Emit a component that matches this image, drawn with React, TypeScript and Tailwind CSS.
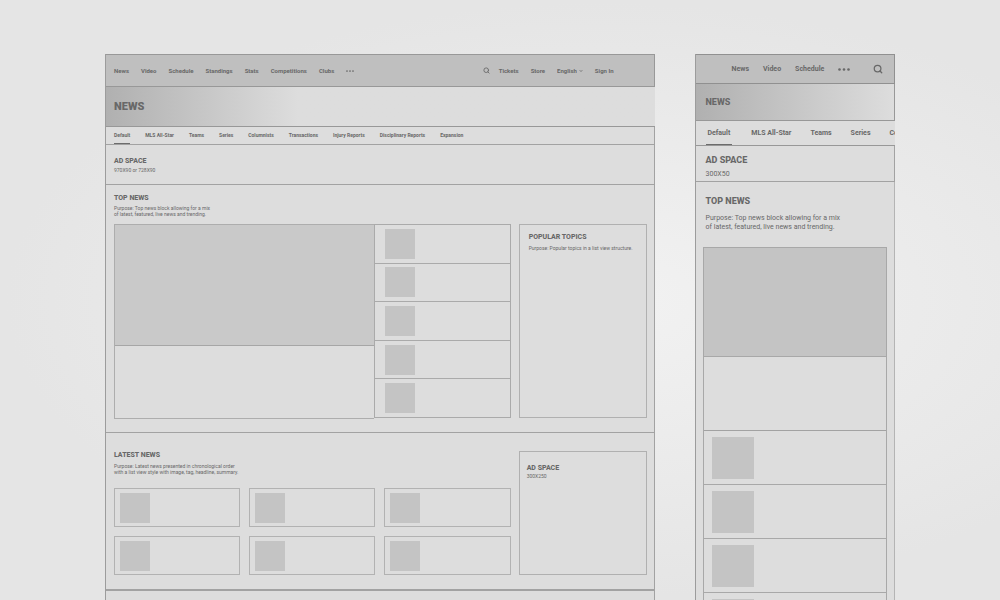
import { Search, ChevronDown } from 'lucide-react';

const desktopLinks = ['News', 'Video', 'Schedule', 'Standings', 'Stats', 'Competitions', 'Clubs'];
const mobileLinks = ['News', 'Video', 'Schedule'];

const desktopTabs = [
  'Default',
  'MLS All-Star',
  'Teams',
  'Series',
  'Columnists',
  'Transactions',
  'Injury Reports',
  'Disciplinary Reports',
  'Expansion'
];
const mobileTabs = ['Default', 'MLS All-Star', 'Teams', 'Series', 'Columnists'];

function DesktopFrame() {
  return (
    <div className="flex min-w-0 flex-[11_1_0%] flex-col border-l border-[#9c9c9c] bg-[#dddddd]">
      {/* Main navigation */}
      <header className="flex h-[33px] shrink-0 items-center justify-between border-y border-r border-[#989898] bg-[#bfbfbf] pr-10 pl-2 text-[6px] leading-[8px] font-bold">
        <nav className="flex items-center gap-3">
          {desktopLinks.map((link) => (
            <a key={link} href="#" className="whitespace-nowrap">
              {link}
            </a>
          ))}
          <MoreButton className="h-[2px] w-2" />
        </nav>
        <div className="flex items-center gap-3">
          <button type="button" aria-label="Search" className="-mr-[3px]">
            <Search className="size-[7px]" strokeWidth={3} />
          </button>
          <a href="#">Tickets</a>
          <a href="#">Store</a>
          <div className="flex items-center gap-[2px]">
            <select aria-label="Language" className="field-sizing-content appearance-none bg-transparent">
              <option>English</option>
            </select>
            <ChevronDown className="pointer-events-none size-1" strokeWidth={5} />
          </div>
          <a href="#">Sign In</a>
        </div>
      </header>

      <div className="flex h-10 shrink-0 items-center border-b border-[#989898] bg-linear-to-r from-[#b0b0b0] to-[#dddddd] to-35% pl-2">
        <h1 className="text-[11px] leading-[12px] font-black">NEWS</h1>
      </div>

      <nav className="flex h-[18px] shrink-0 gap-[15px] border-r border-b border-[#a2a2a2] pl-2 text-[5px] font-bold">
        {desktopTabs.map((tab, i) => (
          <a
            key={tab}
            href="#"
            className={
              i === 0
                ? 'flex items-center border-b border-[#6c6c6c] pt-px whitespace-nowrap'
                : 'flex items-center border-b border-transparent pt-px whitespace-nowrap'
            }
          >
            {tab}
          </a>
        ))}
      </nav>

      <section className="h-10 shrink-0 border-r border-b border-[#a2a2a2] pt-3 pl-2">
        <h2 className="text-[7px] leading-[8px] font-extrabold">AD SPACE</h2>
        <p className="mt-[2px] text-[5px] leading-[6px]">970X90 or 728X90</p>
      </section>

      {/* Top news */}
      <section className="shrink-0 border-r border-b border-[#a2a2a2] pt-[9px] pr-[7px] pb-[13px] pl-2">
        <h2 className="text-[7px] leading-[9px] font-extrabold">TOP NEWS</h2>
        <p className="mt-[2px] text-[5px] leading-[6px]">
          Purpose: Top news block allowing for a mix
          <br />
          of latest, featured, live news and trending.
        </p>
        <div className="mt-[7px] grid h-[195px] grid-cols-[397fr_128fr] gap-2">
          <div className="grid grid-cols-[260fr_136fr]">
            <article className="flex flex-col border border-r-0 border-[#adadad]">
              <div className="h-[121px] border-b border-[#a6a6a6] bg-[#c9c9c9]" />
            </article>
            <ul className="mb-px flex flex-col border border-[#aaaaaa]">
              {[1, 2, 3, 4, 5].map((n) => (
                <li key={n} className="flex flex-1 items-center border-b border-[#aaaaaa] pl-[10px] last:border-b-0">
                  <div className="size-[30px] bg-[#c4c4c4]" />
                </li>
              ))}
            </ul>
          </div>
          <aside className="mb-px border border-[#b0b0b0] pt-2 pl-[9px]">
            <h2 className="text-[7px] leading-[9px] font-extrabold">POPULAR TOPICS</h2>
            <p className="mt-[3px] text-[5px] leading-[6px] whitespace-nowrap">
              Purpose: Popular topics in a list view structure.
            </p>
          </aside>
        </div>
      </section>

      {/* Latest news */}
      <section className="grid shrink-0 grid-cols-[397fr_128fr] gap-2 border-r border-b-2 border-[#a2a2a2] pt-[18px] pr-[7px] pb-[14px] pl-2">
        <div>
          <h2 className="text-[7px] leading-[9px] font-extrabold">LATEST NEWS</h2>
          <p className="mt-[3px] text-[5px] leading-[6px]">
            Purpose: Latest news presented in chronological order
            <br />
            with a list view style with image, tag, headline, summary.
          </p>
          <div className="mt-[13px] grid grid-cols-3 gap-[9px]">
            {[1, 2, 3, 4, 5, 6].map((n) => (
              <article key={n} className="flex h-[39px] items-center border border-[#b2b2b2] pl-[5px]">
                <div className="size-[30px] bg-[#c4c4c4]" />
              </article>
            ))}
          </div>
        </div>
        <aside className="border border-[#b0b0b0] pt-3 pl-[7px]">
          <h2 className="text-[7px] leading-[8px] font-extrabold">AD SPACE</h2>
          <p className="mt-px text-[5px] leading-[6px]">300X250</p>
        </aside>
      </section>

      <section className="flex-1 border-r border-[#a2a2a2]" />
    </div>
  );
}

function MobileFrame() {
  return (
    <div className="flex min-w-0 flex-[4_1_0%] flex-col border-l border-[#9c9c9c] bg-[#dddddd]">
      <header className="flex h-[30px] shrink-0 items-center justify-between border-y border-r border-[#909090] bg-[#bfbfbf] pr-[11px] pl-9 text-[7px] leading-[9px] font-bold">
        <nav className="flex items-center gap-[14px]">
          {mobileLinks.map((link) => (
            <a key={link} href="#">
              {link}
            </a>
          ))}
          <MoreButton className="h-[3px] w-3" />
        </nav>
        <button type="button" aria-label="Search">
          <Search className="size-[10px]" strokeWidth={3} />
        </button>
      </header>

      <div className="flex h-[37px] shrink-0 items-center border-r border-b border-[#989898] bg-linear-to-r from-[#b0b0b0] to-[#dddddd] pl-[10px]">
        <h1 className="text-[9px] leading-[10px] font-extrabold">NEWS</h1>
      </div>

      <nav className="flex h-[25px] shrink-0 gap-[19px] overflow-hidden border-b border-[#989898] pl-[10px] text-[7px] font-bold">
        {mobileTabs.map((tab, i) => (
          <a
            key={tab}
            href="#"
            className={
              i === 0
                ? 'flex items-center border-b border-[#6c6c6c] px-[2px] pt-px whitespace-nowrap'
                : 'flex items-center border-b border-transparent pt-px whitespace-nowrap'
            }
          >
            {tab}
          </a>
        ))}
      </nav>

      <section className="h-9 shrink-0 border-r border-b border-[#a2a2a2] pt-[9px] pl-[10px]">
        <h2 className="text-[9px] leading-[11px] font-extrabold">AD SPACE</h2>
        <p className="mt-1 text-[7px] leading-[9px]">300X50</p>
      </section>

      <section className="flex-1 border-r border-[#b4b4b4] px-[7px] pt-[14px]">
        <h2 className="pl-[3px] text-[9px] leading-[11px] font-extrabold">TOP NEWS</h2>
        <p className="mt-[7px] pl-[3px] text-[7px] leading-[9px] whitespace-nowrap">
          Purpose: Top news block allowing for a mix
          <br />
          of latest, featured, live news and trending.
        </p>
        <div className="mt-[15px] border border-b-0 border-[#a8a8a8]">
          <div className="h-[109px] border-b border-[#a8a8a8] bg-[#c4c4c4]" />
          <div className="h-[74px] border-b border-[#a2a2a2]" />
          <ul>
            {[1, 2, 3, 4, 5].map((n) => (
              <li key={n} className="flex h-[54px] items-center border-b border-[#a8a8a8] pl-2">
                <div className="size-[42px] bg-[#c4c4c4]" />
              </li>
            ))}
          </ul>
        </div>
      </section>
    </div>
  );
}

function MoreButton({ className }: { className: string }) {
  return (
    <button type="button" aria-label="More">
      <svg viewBox="0 0 12 3" className={className} fill="currentColor">
        <circle cx="1.5" cy="1.5" r="1.3" />
        <circle cx="6" cy="1.5" r="1.3" />
        <circle cx="10.5" cy="1.5" r="1.3" />
      </svg>
    </button>
  );
}

export default function App() {
  return (
    <main className="flex h-screen gap-10 overflow-hidden bg-radial-[at_60%_50%] from-[#f2f2f2] to-[#e5e5e5] to-70% px-[10.5%] pt-[54px] font-['Roboto','Liberation_Sans',sans-serif] text-[#686868]">
      <DesktopFrame />
      <MobileFrame />
    </main>
  );
}
